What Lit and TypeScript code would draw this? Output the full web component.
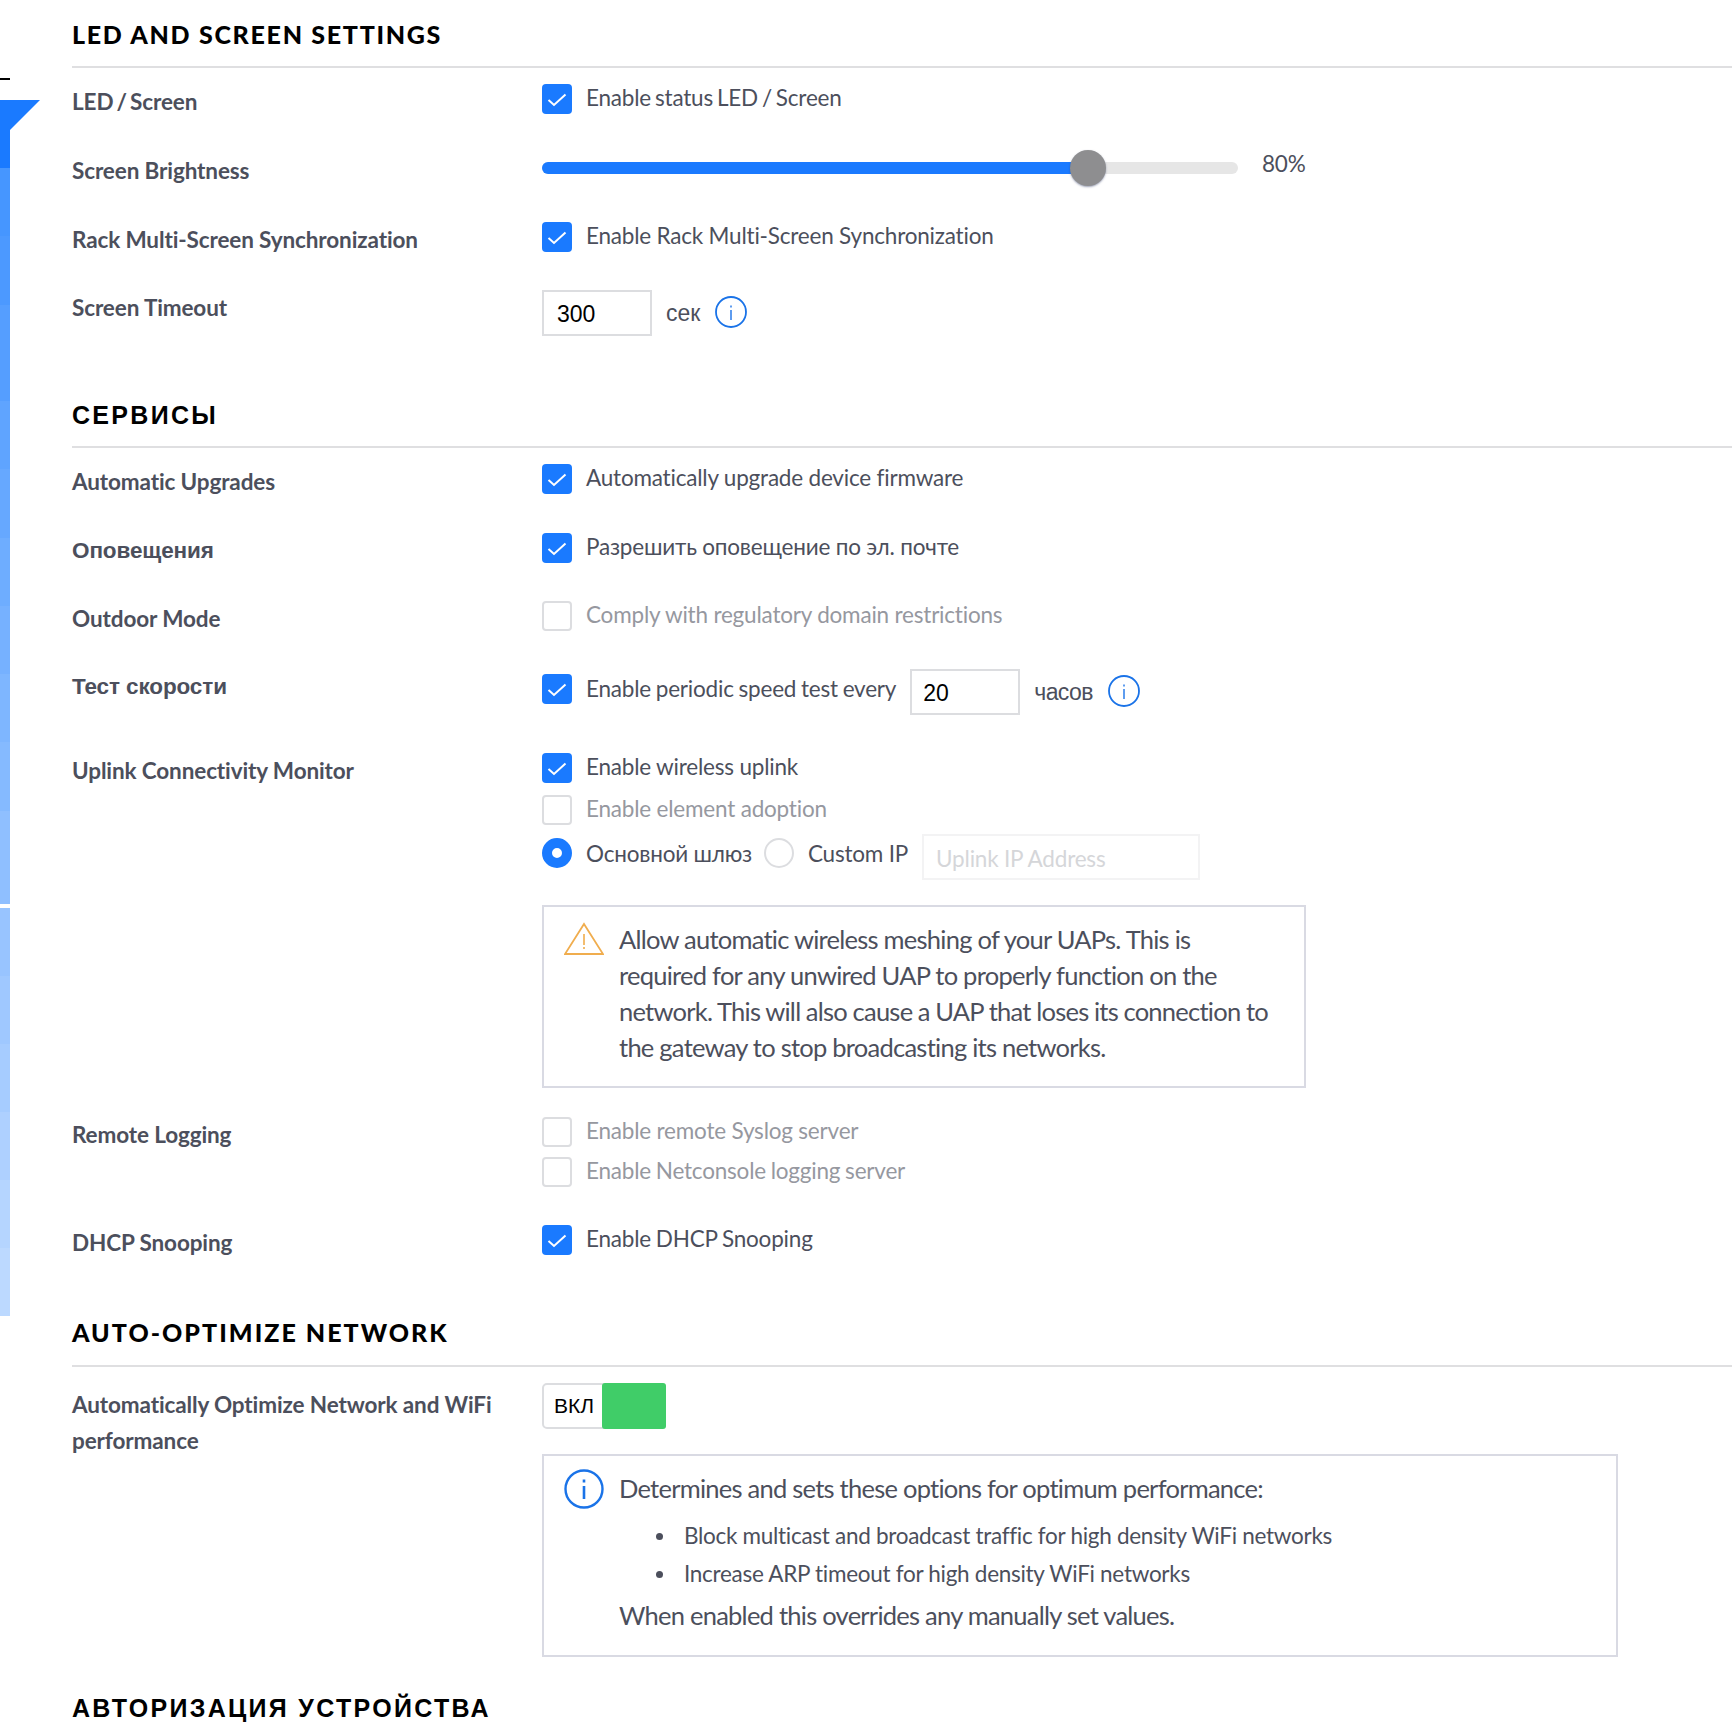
import { LitElement, html, css } from "lit";
import { customElement } from "lit/decorators.js";

const tick = html`<svg width="30" height="30" viewBox="0 0 30 30"><path d="M6.5 16l5.5 5L23.5 10.5" fill="none" stroke="#fff" stroke-width="2"/></svg>`;
const check = html`<span class="box on">${tick}</span>`;
const empty = html`<span class="box"></span>`;
const info = html`<svg class="info" width="32" height="32" viewBox="0 0 32 32"><circle cx="16" cy="16" r="15" fill="none" stroke="#1a73e8" stroke-width="1.8"/><rect x="15.3" y="14" width="1.4" height="10" fill="#1a73e8"/><rect x="15.3" y="9.5" width="1.4" height="2" fill="#1a73e8"/></svg>`;

const stripes: [number, string][] = [
  [68, "#1a7aff"], [68, "#4696ff"], [69, "#4c99ff"], [96, "#559eff"], [68, "#5fa4ff"], [69, "#66a8ff"],
  [68, "#6eadff"], [68, "#76b1ff"], [68, "#7eb6ff"], [69, "#85baff"], [97, "#8fbfff"], [68, "#98c4ff"],
  [68, "#9fc8ff"], [68, "#a6ccff"], [68, "#aed0ff"], [68, "#b5d5ff"], [68, "#bcd9ff"],
];

@customElement("app-root")
export class AppRoot extends LitElement {
  static styles = css`
    :host { display: block; width: 1732px; height: 1726px; overflow: hidden; background: #fff; position: relative; font-family: Lato, "Liberation Sans", sans-serif; color: #4c4f5c; }
    .rail { position: absolute; left: 0; top: 100px; width: 10px; display: flex; flex-direction: column; }
    .rail i { display: block; }
    .gap { position: absolute; left: 0; top: 904px; width: 10px; height: 4px; background: #fff; }
    .tri { position: absolute; left: 0; top: 100px; }
    .dash { position: absolute; left: 0; top: 78px; width: 10px; height: 2px; background: #000; }
    .main { padding: 0 0 0 72px; }
    h2 { margin: 0; font-size: 25px; line-height: 30px; font-weight: 900; letter-spacing: 1.7px; color: #000; padding: 19px 0 17px; border-bottom: 2px solid #dfdfe1; }
    h2.cy { font-family: "Liberation Sans", sans-serif; font-weight: 700; letter-spacing: 2.3px; padding: 20px 0 16px; }
    h2.wide { letter-spacing: 2.03px; padding-bottom: 18px; }
    .row { display: flex; align-items: flex-start; }
    .lab { width: 470px; flex: none; font-size: 22.5px; line-height: 36px; font-weight: 700; letter-spacing: -0.12px; color: #4c4f5c; }
    .lab.cy { font-family: "Liberation Sans", sans-serif; }
    .lab.low { padding-top: 4px; }
    .ws2 { word-spacing: -2.2px; }
    .ws16 { word-spacing: -1.6px; }
    .ws08 { word-spacing: -0.8px; }
    .ws03 { word-spacing: -0.3px; }
    .ctl { flex: 1; display: flex; flex-direction: column; }
    .line { display: flex; align-items: flex-start; font-size: 22.5px; line-height: 28px; letter-spacing: -0.2px; color: #4c4f5c; }
    .line.mid { align-items: center; margin-top: -3px; }
    .box { width: 30px; height: 30px; box-sizing: border-box; border: 2px solid #dcdde0; border-radius: 4px; flex: none; margin-right: 14px; background: #fff; display: block; }
    .box.on { background: #1a7aff; border: none; }
    .box.nudge { margin-top: 5px; }
    .box svg { display: block; }
    .dim { color: #96989f; }
    .inp { width: 110px; height: 46px; box-sizing: border-box; border: 2px solid #dcdde0; font-family: "Liberation Sans", sans-serif; font-size: 23px; letter-spacing: 0; color: #000; padding: 2px 0 0 13px; display: flex; align-items: center; flex: none; }
    .unit { font-family: "Liberation Sans", sans-serif; font-size: 23px; letter-spacing: 0; margin-left: 14px; margin-right: 15px; line-height: 46px; }
    .unit.tight { letter-spacing: -0.6px; }
    .info { display: block; flex: none; margin-top: 6px; }
    .track { width: 696px; height: 12px; border-radius: 6px; background: #e6e6e6; position: relative; flex: none; }
    .fill { width: 546px; height: 12px; border-radius: 6px 0 0 6px; background: #1a7aff; }
    .knob { position: absolute; left: 528px; top: -12px; width: 36px; height: 36px; border-radius: 50%; background: #8e8e90; box-shadow: 0 1px 2px rgba(60,70,110,.5); }
    .pct { margin-left: 24px; margin-bottom: 8px; }
    .nudge { margin-top: 6px; }
    .after { margin-left: 14px; padding-left: 11px; }
    .radio { width: 30px; height: 30px; box-sizing: border-box; border-radius: 50%; border: 2px solid #dcdde0; margin: 4px 14px 0 0; flex: none; background: #fff; }
    .radio.on { border: 10px solid #1a7aff; }
    .radio.next { margin-left: 12px; }
    .ipbox { width: 278px; height: 46px; box-sizing: border-box; border: 2px solid #f3f3f4; color: #d5d6d9; padding: 3px 0 0 12px; display: flex; align-items: center; margin-left: 14px; }
    .note { border: 2px solid #d9dae3; box-sizing: border-box; display: flex; font-size: 25.5px; line-height: 36px; letter-spacing: -0.75px; color: #4c4f5c; }
    .warn { width: 764px; height: 183px; padding: 14px 20px 0 20px; margin-top: 25px; }
    .warn svg { flex: none; margin: 1px 15px 0 0; display: block; }
    .inf svg { flex: none; margin: -1px 15px 0 0; display: block; }
    .inf { width: 1076px; height: 203px; padding: 14px 20px 0 20px; margin-top: 25px; }
    .toggle { width: 124px; height: 46px; box-sizing: border-box; border: 2px solid #dcdde0; border-radius: 5px; position: relative; font-family: "Liberation Sans", sans-serif; font-size: 21px; color: #000; letter-spacing: 0; display: flex; align-items: center; padding-left: 10px; }
    .toggle b { position: absolute; right: -2px; top: -2px; width: 64px; height: 46px; border-radius: 3px; background: #40cd68; }
    ul { margin: 11px 0 4px; padding: 0 0 0 37px; font-size: 22.5px; line-height: 38px; letter-spacing: -0.29px; list-style: none; }
    li { display: flex; align-items: center; }
    li::before { content: ""; width: 7px; height: 7px; border-radius: 50%; background: #4c4f5c; margin-right: 21px; flex: none; }
    .inf p { margin: 0; }
    .s1 { padding-top: 16px; }
    .s2 { margin-top: 44px; }
    .s3 { margin-top: 37px; }
    .s4 { margin-top: 16px; }
    .r69 { height: 69px; }
    .r68 { height: 68px; }
    .r84 { height: 84px; }
    .r364 { height: 364px; }
    .r108 { height: 108px; }
    .mt12 { margin-top: 12px; }
    .mt9 { margin-top: 9px; }
    .mt10 { margin-top: 10px; }
  `;

  render() {
    return html`
      <div class="rail">${stripes.map(([h, c]) => html`<i style="height:${h}px;background:${c}"></i>`)}</div>
      <div class="gap"></div>
      <svg class="tri" width="40" height="36" viewBox="0 0 40 36"><path d="M0 0H40L10 30V36H0Z" fill="#1a7aff"/></svg>
      <div class="dash"></div>
      <div class="main">
        <h2>LED AND SCREEN SETTINGS</h2>
        <div class="row s1 r69"><div class="lab ws2">LED / Screen</div><div class="ctl"><div class="line ws16">${check}Enable status LED / Screen</div></div></div>
        <div class="row r69"><div class="lab">Screen Brightness</div><div class="ctl"><div class="line mid"><div class="track"><div class="fill"></div><div class="knob"></div></div><span class="pct">80%</span></div></div></div>
        <div class="row r68"><div class="lab">Rack Multi-Screen Synchronization</div><div class="ctl"><div class="line">${check}Enable Rack Multi-Screen Synchronization</div></div></div>
        <div class="row"><div class="lab">Screen Timeout</div><div class="ctl"><div class="line"><span class="inp">300</span><span class="unit">сек</span>${info}</div></div></div>

        <div class="s2"><h2 class="cy">СЕРВИСЫ</h2></div>
        <div class="row s1 r69"><div class="lab">Automatic Upgrades</div><div class="ctl"><div class="line">${check}Automatically upgrade device firmware</div></div></div>
        <div class="row r68"><div class="lab cy">Оповещения</div><div class="ctl"><div class="line">${check}Разрешить оповещение по эл. почте</div></div></div>
        <div class="row r68"><div class="lab">Outdoor Mode</div><div class="ctl"><div class="line dim">${empty}Comply with regulatory domain restrictions</div></div></div>
        <div class="row r84"><div class="lab cy">Тест скорости</div><div class="ctl"><div class="line"><span class="box on nudge">${tick}</span><span class="nudge ws08">Enable periodic speed test every</span><span class="inp after">20</span><span class="unit tight">часов</span>${info}</div></div></div>
        <div class="row r364"><div class="lab">Uplink Connectivity Monitor</div><div class="ctl">
          <div class="line">${check}Enable wireless uplink</div>
          <div class="line dim mt12">${empty}Enable element adoption</div>
          <div class="line mt9"><span class="radio on"></span><span class="nudge">Основной шлюз</span><span class="radio next"></span><span class="nudge">Custom IP</span><span class="ipbox">Uplink IP Address</span></div>
          <div class="note warn">
            <svg width="40" height="34" viewBox="0 0 40 34"><path d="M20 2L39 32H1Z" fill="none" stroke="#f0ad4e" stroke-width="1.8"/><rect x="19.2" y="12" width="1.6" height="11" fill="#f0ad4e"/><rect x="19.2" y="25" width="1.6" height="2" fill="#f0ad4e"/></svg>
            <div>Allow automatic wireless meshing of your UAPs. This is<br>required for any unwired UAP to properly function on the<br><span class="ws03">network. This will also cause a UAP that loses its connection to</span><br>the gateway to stop broadcasting its networks.</div>
          </div>
        </div></div>
        <div class="row r108"><div class="lab">Remote Logging</div><div class="ctl">
          <div class="line dim">${empty}Enable remote Syslog server</div>
          <div class="line dim mt10 ws08">${empty}Enable Netconsole logging server</div>
        </div></div>
        <div class="row"><div class="lab">DHCP Snooping</div><div class="ctl"><div class="line ws08">${check}Enable DHCP Snooping</div></div></div>

        <div class="s3"><h2 class="wide">AUTO-OPTIMIZE NETWORK</h2></div>
        <div class="row s1"><div class="lab low">Automatically Optimize Network and WiFi<br>performance</div><div class="ctl">
          <div class="toggle">ВКЛ<b></b></div>
          <div class="note inf">
            <svg width="40" height="40" viewBox="0 0 40 40"><circle cx="20" cy="20" r="18.5" fill="none" stroke="#1a73e8" stroke-width="2.4"/><rect x="18.7" y="17" width="2.6" height="13" fill="#1a73e8"/><rect x="18.7" y="10.5" width="2.6" height="3" fill="#1a73e8"/></svg>
            <div><p>Determines and sets these options for optimum performance:</p><ul><li>Block multicast and broadcast traffic for high density WiFi networks</li><li>Increase ARP timeout for high density WiFi networks</li></ul><p>When enabled this overrides any manually set values.</p></div>
          </div>
        </div></div>

        <div class="s4"><h2 class="cy">АВТОРИЗАЦИЯ УСТРОЙСТВА</h2></div>
      </div>
    `;
  }
}
